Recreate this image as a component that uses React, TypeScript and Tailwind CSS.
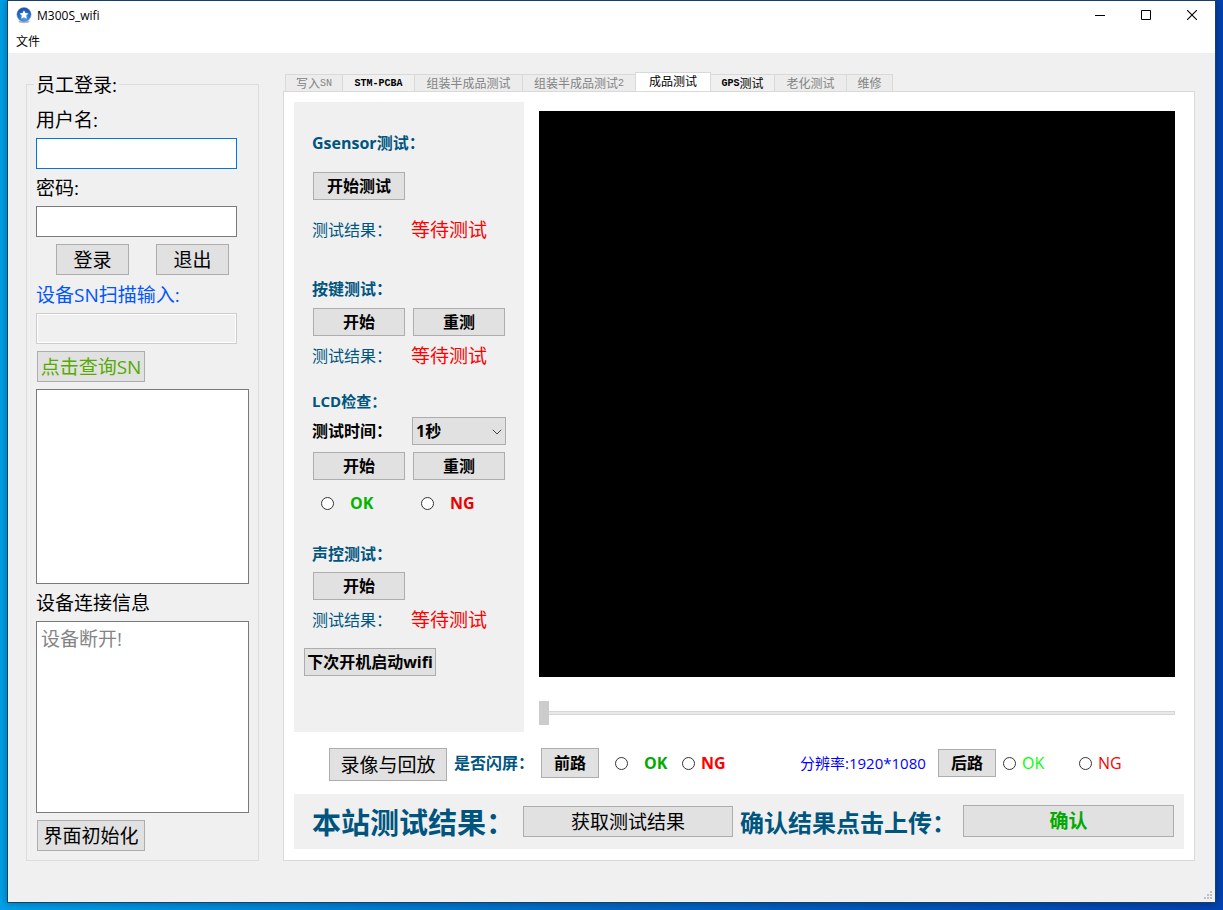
import React from "react";

type ButtonProps = { children: React.ReactNode; className?: string };

function PushButton({ children, className = "" }: ButtonProps) {
  return (
    <button
      type="button"
      className={`flex shrink-0 items-center justify-center whitespace-nowrap border border-[#adadad] bg-[#e1e1e1] ${className}`}
    >
      {children}
    </button>
  );
}

function Radio({ name, label, gap, color }: { name: string; label: string; gap: string; color: string }) {
  return (
    <label className={`flex h-6 shrink-0 items-center text-base ${gap} ${color}`}>
      <input
        type="radio"
        name={name}
        className="size-[13px] shrink-0 appearance-none rounded-full border border-[#333333] bg-white checked:border-4"
      />
      {label}
    </label>
  );
}

const heading = "h-6 whitespace-nowrap text-base leading-6 font-bold text-[#00557f]";
const smallButton = "h-7 w-[92px] text-base font-bold";
const largeButton = "h-[31px] pt-0.5 text-[19px]";

function ResultRow() {
  return (
    <div className="flex h-6 items-center whitespace-nowrap">
      <span className="w-[99px] text-base leading-6 text-[#00557f]">测试结果：</span>
      <span className="text-[19px] leading-6 text-[#ff0000]">等待测试</span>
    </div>
  );
}

type Tab = { latin?: string; text?: string; tail?: string; width: string; state: "disabled" | "normal" | "active" };

const tabs: Tab[] = [
  { text: "写入", tail: "SN", width: "w-[58px] border-l", state: "disabled" },
  { latin: "STM-PCBA", width: "w-[72px]", state: "normal" },
  { text: "组装半成品测试", width: "w-[108px]", state: "disabled" },
  { text: "组装半成品测试", tail: "2", width: "w-[112px] border-r-0", state: "disabled" },
  { text: "成品测试", width: "w-[76px] border-l", state: "active" },
  { latin: "GPS", text: "测试", width: "w-[64px]", state: "normal" },
  { text: "老化测试", width: "w-[72px]", state: "disabled" },
  { text: "维修", width: "w-[46px]", state: "disabled" },
];

const tabStyle = {
  disabled: "h-[17px] bg-[#ececec] pt-0.5 text-[#838383]",
  normal: "h-[17px] bg-[#f0f0f0] pt-0.5 text-black",
  active: "h-5 -mb-px bg-white pb-px text-black",
};

function TabBar() {
  return (
    <div role="tablist" className="flex h-[19px] items-end pl-0.5">
      {tabs.map((tab, i) => (
        <button
          key={i}
          type="button"
          role="tab"
          aria-selected={tab.state === "active"}
          disabled={tab.state === "disabled"}
          className={`flex shrink-0 items-center justify-center whitespace-nowrap border-t border-r border-[#d9d9d9] text-xs leading-4 ${tab.width} ${tabStyle[tab.state]}`}
        >
          {tab.latin && <span className="font-['Liberation_Mono',monospace] text-[10px] font-bold">{tab.latin}</span>}
          {tab.text && <span>{tab.text}</span>}
          {tab.tail && <span className="font-['Liberation_Mono',monospace] text-[10px]">{tab.tail}</span>}
        </button>
      ))}
    </div>
  );
}

function TitleBar() {
  return (
    <header className="flex h-7 items-center bg-white pl-2">
      <svg width="17" height="17" viewBox="0 0 17 17" aria-hidden="true">
        <defs>
          <radialGradient id="orb" cx="0.55" cy="0.75" r="0.75">
            <stop offset="0" stopColor="#56a8ec" />
            <stop offset="0.55" stopColor="#256fd0" />
            <stop offset="1" stopColor="#1747a0" />
          </radialGradient>
        </defs>
        <ellipse cx="8" cy="14.6" rx="5.5" ry="1.6" fill="#b9b9b9" />
        <circle cx="8" cy="7.6" r="7.1" fill="url(#orb)" stroke="#7d97bd" strokeWidth="0.5" />
        <path d="M8 3.2 9.4 6.1 12.5 6.4 10.2 8.6 10.8 11.7 8 10.2 5.2 11.7 5.8 8.6 3.5 6.4 6.6 6.1Z" fill="#fff" />
      </svg>
      <h1 className="ml-1 flex-1 pt-px text-xs">M300S_wifi</h1>
      <button type="button" aria-label="最小化" className="flex h-full w-[46px] items-center justify-center">
        <svg width="10" height="10" shapeRendering="crispEdges">
          <path d="M0 5h10v1H0z" />
        </svg>
      </button>
      <button type="button" aria-label="最大化" className="flex h-full w-[46px] items-center justify-center">
        <svg width="10" height="10" fill="none" stroke="#000">
          <path d="M.5.5h9v9h-9z" />
        </svg>
      </button>
      <button type="button" aria-label="关闭" className="flex h-full w-[46px] items-center justify-center">
        <svg width="10" height="10" fill="none" stroke="#000" strokeWidth="1.1">
          <path d="M0 0l10 10M10 0L0 10" />
        </svg>
      </button>
    </header>
  );
}

function LoginPanel() {
  const label = "block h-[26px] whitespace-nowrap leading-[26px]";
  return (
    <fieldset className="flex w-[233px] shrink-0 flex-col items-start border border-[#dcdcdc] px-[9px] pb-[9px] text-[19px]">
      <legend className="-ml-0.5 h-6 px-0.5 leading-[26px]">员工登录:</legend>
      <label htmlFor="user" className={`mt-[11px] ${label}`}>用户名:</label>
      <input id="user" className="mt-[5px] h-[31px] w-[201px] border border-[#0078d7] bg-white px-1 outline-none" />
      <label htmlFor="password" className={`mt-[6px] ${label}`}>密码:</label>
      <input id="password" type="password" className="mt-[5px] h-[31px] w-[201px] border border-[#7a7a7a] bg-white px-1 outline-none" />
      <div className="mt-[7px] ml-5 flex gap-[27px]">
        <PushButton className={`w-[73px] ${largeButton}`}>登录</PushButton>
        <PushButton className={`w-[73px] ${largeButton}`}>退出</PushButton>
      </div>
      <label htmlFor="sn" className={`mt-[7px] text-[#0055ff] ${label}`}>设备SN扫描输入:</label>
      <input id="sn" disabled className="mt-[5px] h-[31px] w-[201px] border border-[#cccccc] bg-[#f0f0f0] px-1 inset-ring inset-ring-white" />
      <PushButton className={`mt-[7px] ml-px w-[108px] text-[#55aa00] ${largeButton}`}>点击查询SN</PushButton>
      <textarea aria-label="查询结果" className="mt-[7px] min-h-[195px] w-full resize-none border border-[#7a7a7a] bg-white px-1 outline-none" />
      <label htmlFor="info" className={`mt-[6px] ${label}`}>设备连接信息</label>
      <textarea
        id="info"
        readOnly
        value="设备断开!"
        className="mt-[5px] min-h-[120px] w-full flex-1 resize-none border border-[#7a7a7a] bg-white px-1 py-1 leading-[26px] text-[#848484] outline-none"
      />
      <PushButton className={`mt-[7px] ml-px w-[108px] ${largeButton}`}>界面初始化</PushButton>
    </fieldset>
  );
}

function TestPanel() {
  return (
    <div className="w-[230px] shrink-0 bg-[#f0f0f0] pt-[29px] pl-[18px]">
      <section>
        <h2 className={heading}>Gsensor测试：</h2>
        <PushButton className={`mt-[17px] mb-[18px] ml-px ${smallButton}`}>开始测试</PushButton>
        <ResultRow />
      </section>
      <section className="mt-[35px]">
        <h2 className={heading}>按键测试：</h2>
        <div className="mt-[7px] mb-2 ml-px flex gap-2">
          <PushButton className={smallButton}>开始</PushButton>
          <PushButton className={smallButton}>重测</PushButton>
        </div>
        <ResultRow />
      </section>
      <section className="mt-[21px]">
        <h2 className="h-6 text-[15px] leading-6 font-bold text-[#00557f]">LCD检查：</h2>
        <div className="mt-1 flex items-center">
          <label htmlFor="duration" className="w-[100px] text-base font-bold">测试时间：</label>
          <div className="relative h-7 w-[94px]">
            <select id="duration" className="block h-7 w-full appearance-none border border-[#adadad] bg-[#e1e1e1] px-[3px] text-base leading-6 font-bold">
              <option>1秒</option>
            </select>
            <svg className="pointer-events-none absolute top-3 right-1" width="10" height="6" fill="none" stroke="#444">
              <path d="M.8.8 5 5 9.2.8" />
            </svg>
          </div>
        </div>
        <div className="mt-[7px] ml-px flex gap-2">
          <PushButton className={smallButton}>开始</PushButton>
          <PushButton className={smallButton}>重测</PushButton>
        </div>
        <div className="mt-[11px] grid grid-cols-[100px_1fr] pl-[9px] font-bold">
          <Radio name="lcd" label="OK" gap="gap-4" color="text-[#00b400]" />
          <Radio name="lcd" label="NG" gap="gap-4" color="text-[#ee0000]" />
        </div>
      </section>
      <section className="mt-[27px]">
        <h2 className={heading}>声控测试：</h2>
        <PushButton className={`mt-[6px] mb-2 ml-px ${smallButton}`}>开始</PushButton>
        <ResultRow />
      </section>
      <PushButton className="mt-4 -ml-2 h-7 w-[132px] text-base font-bold">下次开机启动wifi</PushButton>
    </div>
  );
}

function Preview() {
  return (
    <div className="mr-[9px] ml-[15px] flex min-w-0 flex-1 flex-col pt-[9px] pb-[7px]">
      <div className="flex-1 bg-black" />
      <input
        type="range"
        aria-label="播放进度"
        defaultValue={0}
        className="mt-6 h-6 w-full appearance-none bg-transparent [&::-webkit-slider-runnable-track]:h-1 [&::-webkit-slider-runnable-track]:border [&::-webkit-slider-runnable-track]:border-[#d6d6d6] [&::-webkit-slider-runnable-track]:bg-[#e7eaea] [&::-webkit-slider-thumb]:-mt-[11px] [&::-webkit-slider-thumb]:-ml-px [&::-webkit-slider-thumb]:h-6 [&::-webkit-slider-thumb]:w-[10px] [&::-webkit-slider-thumb]:appearance-none [&::-webkit-slider-thumb]:bg-[#cccccc]"
      />
    </div>
  );
}

function PlaybackRow() {
  return (
    <div className="mt-4 flex h-[33px] pl-[35px]">
      <PushButton className="h-[33px] w-[118px] pt-0.5 text-[19px]">录像与回放</PushButton>
      <div className="flex h-[30px] flex-1 items-center whitespace-nowrap">
        <span className="ml-[7px] w-[87px] text-base font-bold text-[#00557f]">是否闪屏：</span>
        <PushButton className="h-[30px] w-[58px] text-base font-bold">前路</PushButton>
        <div className="ml-4 w-[67px] font-bold">
          <Radio name="front" label="OK" gap="gap-4" color="text-[#00aa00]" />
        </div>
        <div className="font-bold">
          <Radio name="front" label="NG" gap="gap-1.5" color="text-[#ff0000]" />
        </div>
        <span className="ml-auto w-[138px] text-[15px] text-[#0000ff]">分辨率:1920*1080</span>
        <PushButton className="h-7 w-[58px] text-base font-bold">后路</PushButton>
        <div className="ml-[7px] w-[76px]">
          <Radio name="rear" label="OK" gap="gap-1.5" color="text-[#00ff00]" />
        </div>
        <div className="w-[105px]">
          <Radio name="rear" label="NG" gap="gap-1.5" color="text-[#ff0000]" />
        </div>
      </div>
    </div>
  );
}

function SummaryBar() {
  return (
    <div className="mt-[13px] flex h-[55px] items-center bg-[#f0f0f0] pr-[10px] pl-[18px] whitespace-nowrap">
      <span className="w-[211px] pt-0.5 text-[29px] font-bold text-[#00557f]">本站测试结果：</span>
      <PushButton className={`w-[210px] ${largeButton}`}>获取测试结果</PushButton>
      <span className="ml-[7px] w-[223px] pt-0.5 text-2xl font-bold text-[#00557f]">确认结果点击上传：</span>
      <PushButton className="mb-px h-8 min-w-[211px] flex-1 text-[19px] font-bold text-[#00aa00]">确认</PushButton>
    </div>
  );
}

export default function App() {
  return (
    <div className="flex min-h-screen flex-col bg-linear-to-r from-[#00a0e8] via-[#0068c4] to-[#0442b0] px-[7px] pb-[7px] font-['Open_Sans','Noto_Sans_CJK_SC',sans-serif] text-black">
      <div className="flex flex-1 flex-col border border-[#16406a] bg-[#f0f0f0] shadow-[0_0_8px_rgba(0,0,0,0.35)]">
        <TitleBar />
        <nav className="flex h-6 items-center bg-white pt-px pl-2 text-xs">
          <button type="button">文件</button>
        </nav>
        <main className="flex flex-1 gap-6 pt-[19px] pr-5 pl-[18px]">
          <LoginPanel />
          <div className="flex min-w-0 flex-1 flex-col">
            <TabBar />
            <div className="flex flex-1 flex-col border border-[#d9d9d9] bg-white px-[10px] pt-[10px] pb-[11px]">
              <div className="flex flex-1">
                <TestPanel />
                <Preview />
              </div>
              <PlaybackRow />
              <SummaryBar />
            </div>
          </div>
        </main>
        <footer className="flex h-[41px] items-end justify-end pr-[3px] pb-[3px]">
          <svg width="8" height="8" fill="#bfbfbf" aria-hidden="true">
            <path d="M6 0h2v2H6zM3 3h2v2H3zM6 3h2v2H6zM0 6h2v2H0zM3 6h2v2H3zM6 6h2v2H6z" />
          </svg>
        </footer>
      </div>
    </div>
  );
}
